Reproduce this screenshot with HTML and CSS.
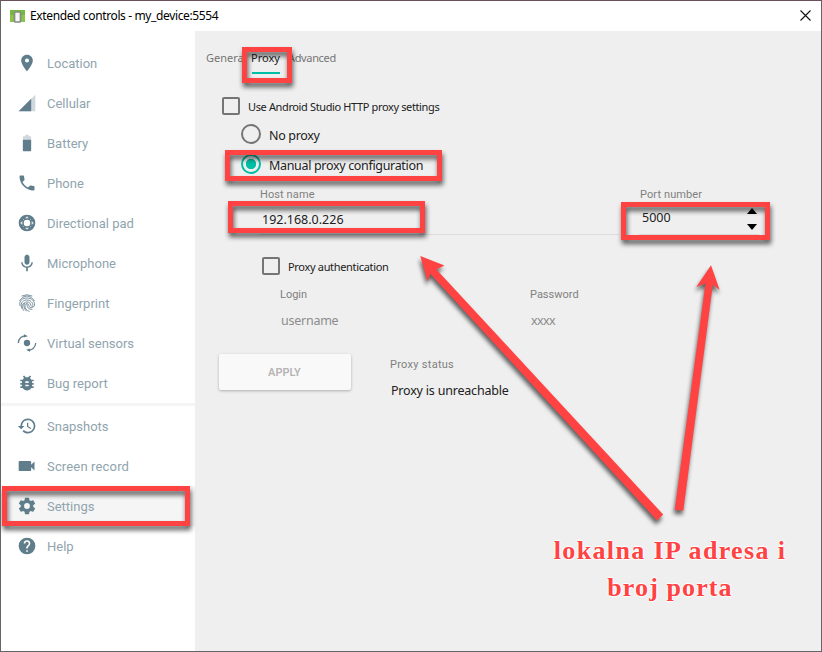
FILE: index.html
```html
<!DOCTYPE html>
<html lang="en">
<head>
<meta charset="utf-8">
<title>Extended controls</title>
<link rel="stylesheet" href="styles.css">
</head>
<body>
<div class="window">
  <header class="titlebar">
    <svg class="app-icon" width="15" height="13" viewBox="0 0 15 13"><rect width="15" height="12" fill="#76b83f"/><rect y="5" width="15" height="7" fill="#8bc34a"/><rect x="4.500" y="2" width="6" height="10" rx="1" fill="#f6f6f6" stroke="#858b85" stroke-width="1.700"/></svg>
    <h1 class="title"><span class="t-title">Extended controls - my_device:5554</span></h1>
    <svg class="close" width="11" height="11" viewBox="0 0 11 11"><path d="M.5.5l10 10M10.5.5l-10 10" stroke="#111" stroke-width="1.1"/></svg>
  </header>
  <div class="body">
    <nav class="sidebar">
      <a class="item"><svg viewBox="0 0 24 24"><path d="M12 2C8.13 2 5 5.13 5 9c0 5.25 7 13 7 13s7-7.75 7-13c0-3.87-3.13-7-7-7zm0 9.500a2.500 2.500 0 1 1 0-5 2.500 2.500 0 0 1 0 5z"/></svg><span>Location</span></a>
      <a class="item"><svg viewBox="0 0 24 24"><path opacity=".3" d="M2 22h20V2z"/><path d="M17 7L2 22h15z"/></svg><span>Cellular</span></a>
      <a class="item"><svg viewBox="0 0 24 24"><path opacity=".3" d="M17 5.330C17 4.600 16.400 4 15.670 4H14V2h-4v2H8.330C7.600 4 7 4.600 7 5.330V8h10z"/><path d="M7 8v12.670C7 21.400 7.600 22 8.330 22h7.330c.74 0 1.340-.6 1.340-1.330V8z"/></svg><span>Battery</span></a>
      <a class="item"><svg viewBox="0 0 24 24"><path d="M6.620 10.790c1.440 2.830 3.760 5.140 6.590 6.590l2.200-2.200c.27-.27.67-.36 1.020-.24 1.120.37 2.330.57 3.570.57.55 0 1 .45 1 1V20c0 .55-.45 1-1 1C10.610 21 3 13.390 3 4c0-.55.45-1 1-1h3.500c.55 0 1 .45 1 1 0 1.250.2 2.450.57 3.570.11.35.03.74-.25 1.020z"/></svg><span>Phone</span></a>
      <a class="item"><svg viewBox="0 0 24 24"><circle cx="12" cy="12" r="10"/><circle cx="12" cy="12" r="3.900" fill="#fff"/><path fill="#dde3e6" d="M12 3.800l2.400 2.600H9.600zM12 20.200l2.400-2.600H9.600zM3.800 12l2.600-2.400v4.800zM20.200 12l-2.600-2.400v4.800z"/><path d="M7.300 7.300l1.500 1.500M16.700 7.300l-1.500 1.500M7.300 16.700l1.500-1.500M16.700 16.700l-1.500-1.500" stroke="#b4c1c7" stroke-width="1.200"/></svg><span>Directional pad</span></a>
      <a class="item"><svg viewBox="0 0 24 24"><path d="M12 14c1.660 0 3-1.340 3-3V5c0-1.660-1.340-3-3-3S9 3.340 9 5v6c0 1.660 1.340 3 3 3zm5.300-3c0 3-2.540 5.100-5.300 5.100S6.700 14 6.700 11H5c0 3.410 2.720 6.230 6 6.720V22h2v-4.280c3.280-.48 6-3.300 6-6.720z"/></svg><span>Microphone</span></a>
      <a class="item"><svg viewBox="0 0 24 24"><g fill="none" stroke="#607d8b" stroke-width="1" stroke-linecap="round"><path d="M6 3.500Q12 .5 18 3.500M3.200 9Q7 3.500 12 3.500T20.800 9M3.500 15C2 9 7 6 12 6s9.500 3 9 9c-.2 2-3.500 2-4.200 0C16 12 15 10.800 12 10.800c-5 0-5 6.200-1 10.700M5.500 18C3.500 11 8 8.400 12 8.400s7.200 3 7 6.400M8 21c-3-5-2-8 1-9M12 13.500c0 4 2 6.500 6 6M14.500 22c-3.500-1-5-4-5-7 0-3 4.500-3 4.800 0 .2 2.500 2 3 4 2.500"/></g></svg><span>Fingerprint</span></a>
      <a class="item"><svg viewBox="0 0 24 24"><circle cx="12" cy="12" r="3.800"/><path d="M1.500 12C2 6.500 6 3 11 3.600M22.500 12c-.5 5.500-4.500 9-9.500 8.400" fill="none" stroke="#607d8b" stroke-width="1.500"/><path d="M8.500 1.500l4.500 2.500-5 1.500zM15.500 22.500l-4.500-2.500 5-1.500z"/></svg><span>Virtual sensors</span></a>
      <a class="item"><svg viewBox="0 0 24 24"><path d="M20 8h-2.810c-.45-.78-1.070-1.450-1.820-1.960L17 4.410 15.590 3l-2.170 2.170C12.960 5.060 12.490 5 12 5s-.96.06-1.410.17L8.410 3 7 4.410l1.620 1.630C7.880 6.550 7.260 7.220 6.810 8H4v2h2.090c-.05.33-.09.66-.09 1v1H4v2h2v1c0 .34.04.67.09 1H4v2h2.810c1.040 1.790 2.970 3 5.190 3s4.150-1.210 5.190-3H20v-2h-2.090c.05-.33.09-.66.09-1v-1h2v-2h-2v-1c0-.34-.04-.67-.09-1H20zm-6 8h-4v-2h4zm0-4h-4v-2h4z"/></svg><span>Bug report</span></a>
      <hr class="divider">
      <a class="item"><svg viewBox="0 0 24 24"><path d="M13 3a9 9 0 0 0-9 9H1l4 4 4-4H6a7 7 0 1 1 2.060 4.940l-1.420 1.420A9 9 0 1 0 13 3zm-1 5v5l4.280 2.540.72-1.210-3.500-2.080V8z"/></svg><span>Snapshots</span></a>
      <a class="item"><svg viewBox="0 0 24 24"><path d="M17 10.500V7c0-.55-.45-1-1-1H3c-.55 0-1 .45-1 1v10c0 .55.45 1 1 1h13c.55 0 1-.45 1-1v-3.500l4 4v-11z"/></svg><span class="t-record">Screen record</span></a>
      <a class="item selected"><svg viewBox="0 0 24 24"><path d="M19.430 12.980c.04-.32.07-.64.07-.98s-.03-.66-.07-.98l2.110-1.650c.19-.15.24-.42.12-.64l-2-3.460c-.12-.22-.39-.3-.61-.22l-2.490 1c-.52-.4-1.080-.73-1.690-.98l-.38-2.650A.488.488 0 0 0 14 2h-4c-.25 0-.46.18-.49.42l-.38 2.650c-.61.25-1.170.59-1.690.98l-2.490-1c-.23-.09-.49 0-.61.22l-2 3.460c-.13.22-.07.49.12.64l2.110 1.650c-.04.32-.07.65-.07.98s.03.66.07.98l-2.110 1.650c-.19.15-.24.42-.12.64l2 3.460c.12.22.39.3.61.22l2.490-1c.52.4 1.080.73 1.690.98l.38 2.650c.03.24.24.42.49.42h4c.25 0 .46-.18.49-.42l.38-2.650c.61-.25 1.170-.59 1.690-.98l2.490 1c.23.09.49 0 .61-.22l2-3.460c.12-.22.07-.49-.12-.64zM12 15.500a3.500 3.500 0 1 1 0-7 3.500 3.500 0 0 1 0 7z"/></svg><span>Settings</span></a>
      <a class="item"><svg viewBox="0 0 24 24"><path d="M12 2a10 10 0 1 0 0 20 10 10 0 0 0 0-20zm1 17h-2v-2h2zm2.070-7.750l-.9.920C13.450 12.900 13 13.500 13 15h-2v-.5c0-1.100.45-2.100 1.170-2.830l1.240-1.260c.37-.36.59-.86.59-1.410a2 2 0 0 0-4 0H8a4 4 0 0 1 8 0c0 .88-.36 1.680-.93 2.250z"/></svg><span>Help</span></a>
    </nav>
    <main class="content">
      <div class="tabs"><span class="tab general">General</span><span class="tab active"><span class="t-proxy">Proxy</span></span><span class="tab advanced">Advanced</span></div>
      <label class="check studio"><i class="box"></i><span class="t-studio">Use Android Studio HTTP proxy settings</span></label>
      <label class="radio"><i class="dot"></i><span>No proxy</span></label>
      <label class="radio on"><i class="dot"></i><span>Manual proxy configuration</span></label>
      <div class="address">
        <div class="field"><span class="caption t-host">Host name</span><div class="value"><span>192.168.0.226</span></div></div>
        <div class="field"><span class="caption t-host">Port number</span><div class="value port"><span>5000</span><span class="spin"><svg width="10" height="6" viewBox="0 0 10 6"><path d="M0 6L5 0l5 6z"/></svg><svg width="10" height="6" viewBox="0 0 10 6"><path d="M0 0h10L5 6z"/></svg></span></div></div>
      </div>
      <label class="check auth"><i class="box"></i><span class="t-auth">Proxy authentication</span></label>
      <div class="credentials">
        <div><span class="caption">Login</span><span class="hint t-user">username</span></div>
        <div><span class="caption">Password</span><span class="hint t-x">xxxx</span></div>
      </div>
      <div class="footer">
        <button class="apply">APPLY</button>
        <div class="status"><span class="caption t-status">Proxy status</span><span class="result">Proxy is unreachable</span></div>
      </div>
    </main>
  </div>
  <svg class="marks" width="822" height="652" viewBox="0 0 822 652">
    <g class="outlines">
      <rect x="244.500" y="49.500" width="45" height="31"/>
      <rect x="227.500" y="152.500" width="212" height="26"/>
      <rect x="230.500" y="203.500" width="192" height="27"/>
      <rect x="623.500" y="204.500" width="144" height="33"/>
      <rect x="4.500" y="488.500" width="183" height="35"/>
    </g>
    <g class="arrows">
      <path d="M420.300 256L444.500 265.500L436.500 269.500L663.200 514.500L657 520.500L430.500 274L427.500 281.500Z"/>
      <path d="M711 265.300L719.700 290L712.800 284.800L683.300 510.800L674.700 509.700L705.500 283.500L696.300 287Z"/>
    </g>
  </svg>
  <p class="note"><span class="note-first">lokalna IP adresa i</span><span class="note-second">broj porta</span></p>
</div>
</body>
</html>
```
FILE: styles.css
```css
* { box-sizing: border-box; }
body { margin: 0; font-family: Roboto, sans-serif; }
.window {
  position: relative;
  width: 822px; height: 652px;
  overflow: hidden;
  background: #fff;
  border: 1px solid #66636a;
  border-top-color: #6b4f5b;
  display: flex; flex-direction: column;
}
.titlebar { flex: 0 0 30px; display: flex; align-items: center; padding: 0 10px 0 9px; }
.app-icon { margin-top: 1px; }
.title { flex: 1; margin: 0 0 0 5px; font: 12px/18px "Noto Sans", sans-serif; letter-spacing: -.37px; color: #000; }
.close { margin-top: -2px; }
.body { flex: 1; display: flex; min-height: 0; }
.sidebar { width: 194px; padding-top: 12px; background: #fff; }
.item {
  display: flex; align-items: center; gap: 10px;
  height: 40px; padding-left: 16px;
  font-size: 13px; color: #90a4ae; white-space: nowrap;
}
.item svg { width: 20px; height: 20px; fill: #607d8b; }
.item.selected { background: #f5f5f5; }
.t-record { letter-spacing: .16px; }
.divider { height: 3px; margin: 0; border: 0; background: #f5f5f5; }
.content { flex: 1; background: #efefef; color: #212121; white-space: nowrap; }

.tabs { display: flex; height: 43px; padding: 17px 0 0 11px; font: 11px/20px "Noto Sans", sans-serif; color: #757575; }
.general { width: 46px; }
.tab.active { width: 28px; margin-right: 8px; height: 26px; border-bottom: 2px solid #00bfa5; color: #212121; }
.t-proxy { margin-left: -1px; }
.advanced { letter-spacing: -.35px; }
.check { display: flex; align-items: center; gap: 8px; font: 11px/18px "Noto Sans", sans-serif; }
.check span { padding-top: 2px; }
.box { width: 18px; height: 18px; border: 2px solid #757575; border-radius: 2px; }
.studio { height: 18px; margin: 23px 0 0 27px; letter-spacing: -.37px; }
.radio { display: flex; align-items: center; gap: 8px; height: 20px; margin: 9px 0 10px 46px; font: 12.500px/20px "Noto Sans", sans-serif; letter-spacing: -.33px; }
.radio span { padding-top: 3px; }
.radio.on { margin: 0 0 0 46px; }
.dot { width: 20px; height: 20px; border: 2px solid #757575; border-radius: 50%; }
.on .dot { border-color: #00bfa5; background: radial-gradient(circle, #00bfa5 4.800px, transparent 5.500px); }
.address { display: flex; gap: 20px; margin: 13px 0 0 64px; }
.caption { display: block; font-size: 11px; line-height: 16px; color: #808080; }
.t-host { letter-spacing: .1px; }
.field:first-child { width: 360px; }
.field:last-child { width: 120px; }
.field .caption { padding-left: 1px; }
.value { height: 32px; padding: 7px 3px 0; border-bottom: 1px solid #dcdcdc; font: 12.500px/20px "Noto Sans", sans-serif; }
.port { display: flex; justify-content: space-between; padding: 5px 2px 0 3px; }
.spin { display: flex; flex-direction: column; gap: 10px; }
.spin svg { display: block; }
.auth { height: 18px; margin: 22px 0 0 67px; letter-spacing: -.32px; }
.credentials { display: flex; margin: 12px 0 0 85px; }
.credentials > div { width: 250px; }
.hint { display: block; margin: 8px 0 0 1px; font: 12.500px/20px "Noto Sans", sans-serif; color: #8c8c8c; }
.t-user { letter-spacing: -.25px; }
.t-x { letter-spacing: -.65px; }
.footer { display: flex; margin: 23px 0 0 24px; }
.apply { width: 132px; height: 36px; padding: 0 1px 0 0; border: 0; border-radius: 2px; background: #f9f9f9; box-shadow: 0 1px 3px rgba(0,0,0,.28); font: 600 11px Roboto, sans-serif; color: #b5b5b5; }
.status { margin: 3px 0 0 39px; }
.t-status { letter-spacing: .28px; }
.result { display: block; margin: 8px 0 0 1px; font: 12.500px/20px "Noto Sans", sans-serif; letter-spacing: -.2px; }

/* annotation layer over the window */
.marks { position: absolute; left: -1px; top: -1px; pointer-events: none; }
.outlines { fill: none; stroke: #ff4343; stroke-width: 5; filter: drop-shadow(1px 4px 2.500px rgba(0,0,0,.65)); }
.arrows { fill: #ff4343; filter: drop-shadow(-1px 4px 2px rgba(0,0,0,.6)); }
.note {
  position: absolute; left: 548px; top: 531px; width: 242px; margin: 0;
  display: flex; flex-direction: column; align-items: center;
  font: bold 26px/37px "Palatino Linotype", Palatino, "Liberation Serif", serif;
  color: #ff4343; white-space: nowrap;
  text-shadow: 1px 0 1px #fff, -1px 0 1px #fff, 0 1px 1px #fff, 0 -1px 1px #fff;
}
.note-first { letter-spacing: 1.350px; }
.note-second { letter-spacing: 1.100px; }
```
